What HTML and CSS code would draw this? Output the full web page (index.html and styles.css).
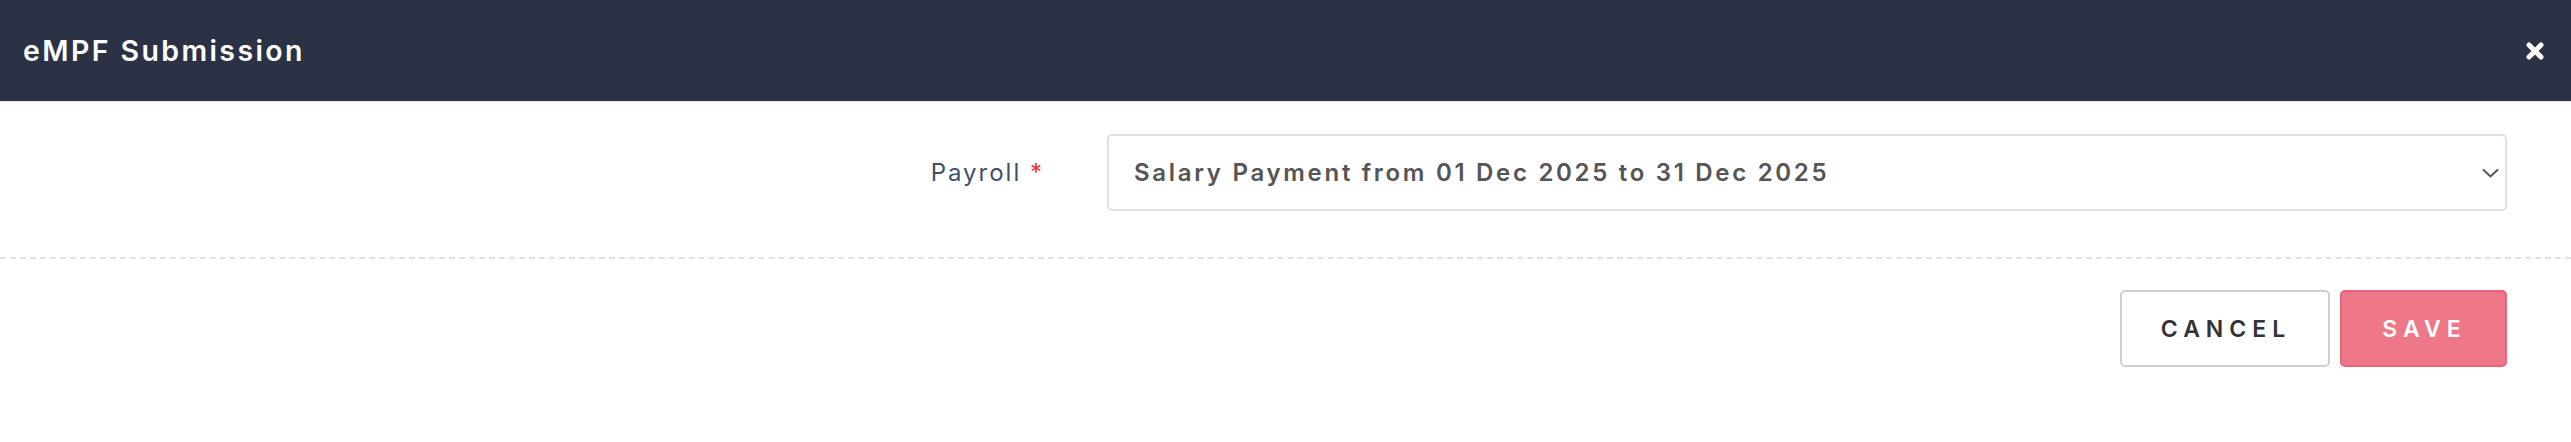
FILE: index.html
```html
<!DOCTYPE html>
<html>
<head>
<meta charset="utf-8">
<link rel="stylesheet" href="styles.css">
</head>
<body>
<div class="modal">
  <div class="modal-header">
    <h1 class="modal-title">eMPF Submission</h1>
    <button class="close-btn" aria-label="Close">
      <svg width="20" height="20" viewBox="0 0 20 20"><path d="M4 4 L16 16 M16 4 L4 16" stroke="#fff" stroke-width="5" stroke-linecap="round"/></svg>
    </button>
  </div>
  <div class="modal-body">
    <div class="form-row">
      <label class="form-label">Payroll <span class="req">*</span></label>
      <div class="select">
        <span class="select-value">Salary Payment from 01 Dec 2025 to 31 Dec 2025</span>
        <svg class="chevron" width="17" height="10" viewBox="0 0 17 10"><path d="M1 1.5 L8.5 8.5 L16 1.5" fill="none" stroke="#555" stroke-width="2"/></svg>
      </div>
    </div>
  </div>
  <div class="modal-footer">
    <button class="btn btn-cancel">CANCEL</button>
    <button class="btn btn-save">SAVE</button>
  </div>
</div>
</body>
</html>
```
FILE: styles.css
```css
html, body {
  margin: 0;
  padding: 0;
  background: #fff;
  font-family: "Inter", "Noto Sans", sans-serif;
}
.modal {
  width: 100%;
}
.modal-header {
  height: 101px;
  background: #2c3246;
  border-bottom: 1px solid #e6e6e2;
  display: flex;
  align-items: center;
  justify-content: space-between;
  padding: 0 26px 0 23px;
}
.modal-title {
  margin: 0;
  color: #fff;
  font-size: 28.5px;
  font-weight: 600;
  letter-spacing: 2.4px;
}
.close-btn {
  background: none;
  border: none;
  padding: 0;
  width: 20px;
  height: 20px;
  display: flex;
}
.modal-body {
  padding: 32px 64px 46px 0;
  border-bottom: 2px dashed #e2e2e2;
}
.form-row {
  display: flex;
  align-items: center;
}
.form-label {
  flex: 1;
  text-align: right;
  padding-right: 63px;
  font-size: 24px;
  color: #3f5068;
  letter-spacing: 2px;
}
.req {
  color: #e8312a;
}
.select {
  width: 1400px;
  height: 77px;
  box-sizing: border-box;
  border: 2px solid #e0e0e0;
  border-radius: 5px;
  display: flex;
  align-items: center;
  justify-content: space-between;
  padding: 0 6px 0 25px;
}
.select-value {
  font-size: 24px;
  font-weight: 600;
  color: #555;
  letter-spacing: 2.7px;
}
.modal-footer {
  display: flex;
  justify-content: flex-end;
  gap: 10px;
  padding: 31px 64px 0 0;
}
.btn {
  height: 77px;
  box-sizing: border-box;
  border-radius: 5px;
  font-family: "Inter", "Noto Sans", sans-serif;
  font-size: 23px;
  font-weight: 600;
  letter-spacing: 6px;
  padding: 0 0 0 2px;
}
.btn-cancel {
  width: 210px;
  background: #fff;
  border: 2px solid #cfcfcf;
  color: #333;
}
.btn-save {
  width: 167px;
  background: #ee7788;
  border: 2px solid #e9647a;
  color: #fff;
}
```
